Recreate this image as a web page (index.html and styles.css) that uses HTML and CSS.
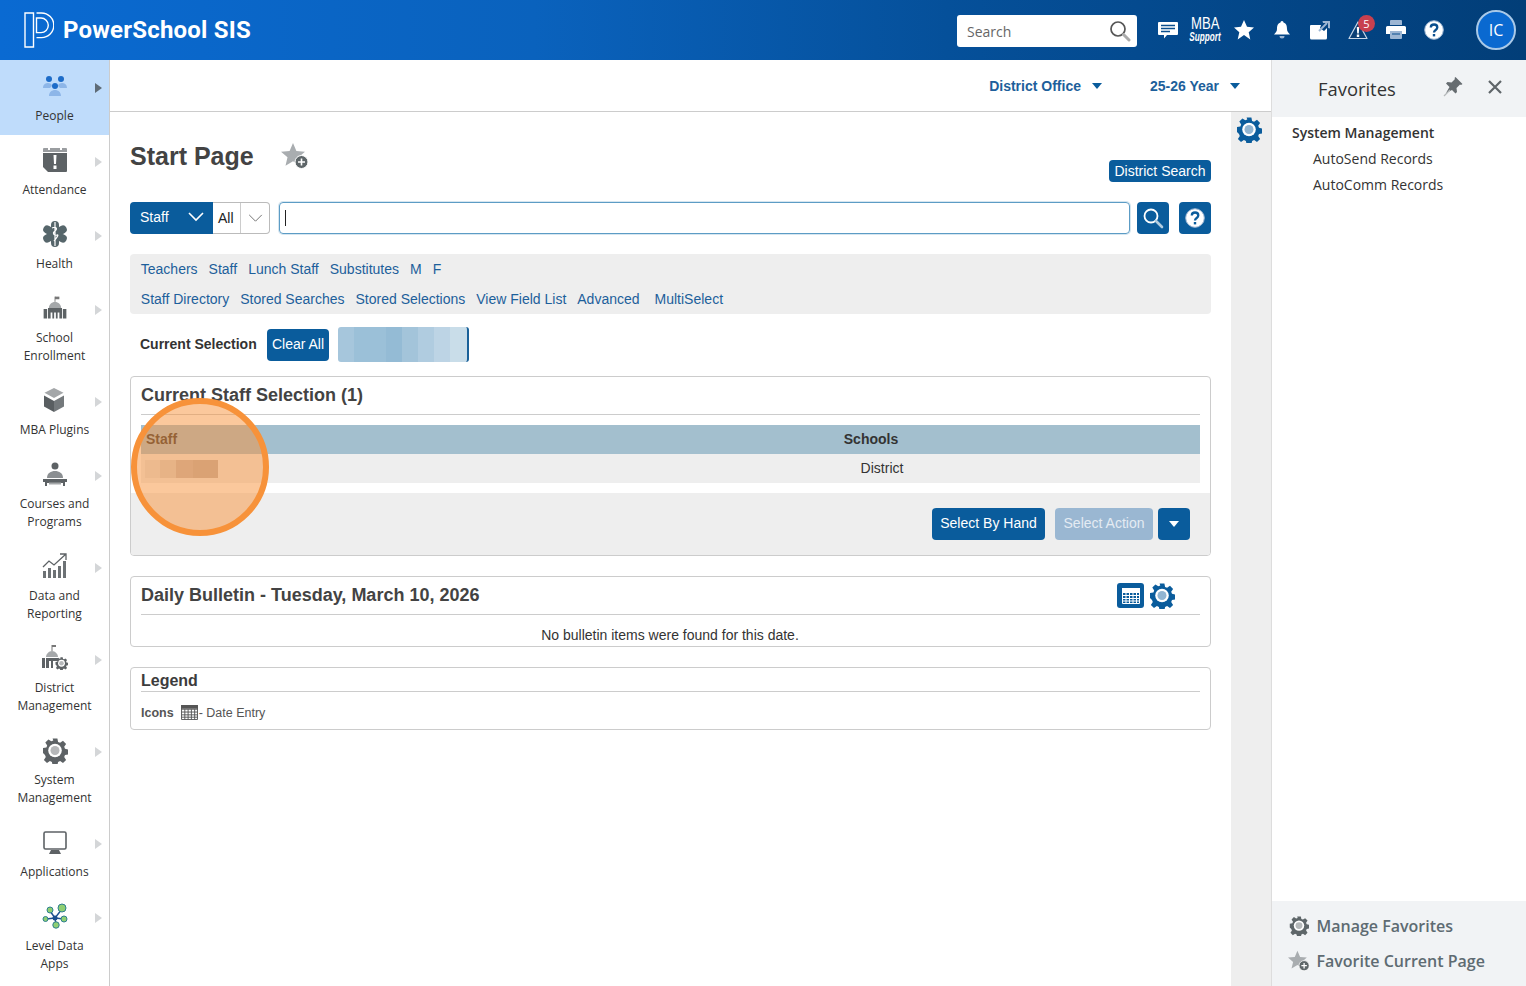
FILE: index.html
```html
<!DOCTYPE html>
<html lang="en">
<head>
<meta charset="utf-8">
<title>Start Page</title>
<link rel="stylesheet" href="styles.css">
</head>
<body>
<svg class="defs" width="0" height="0" aria-hidden="true">
  <symbol id="gear" viewBox="0 0 26 26">
    <path fill="currentColor" d="M10.600 1h4.800l.7 3.400 2 .8 2.900-1.900 3.100 3.100-1.900 2.900.8 2 3.400.7v4.800l-3.400.7-.8 2 1.900 2.900-3.100 3.100-2.900-1.900-2 .8-.7 3.400h-4.800l-.7-3.400-2-.8-2.900 1.900-3.100-3.100 1.900-2.900-.8-2L1 15.400v-4.800l3.400-.7.8-2-1.900-2.900 3.100-3.100 2.900 1.900 2-.8z" transform="translate(0 -.5)"/>
    <circle cx="13" cy="12.500" r="6.800" fill="#fff"/>
    <circle cx="13" cy="12.500" r="4.500" fill="currentColor" opacity=".45"/>
  </symbol>
  <symbol id="starplus" viewBox="0 0 28 28">
    <path fill="#a9adb0" d="M12 1l3.400 8 8.600.7-6.500 5.600 2 8.400-7.500-4.500-7.500 4.500 2-8.400L0 9.700 8.600 9z"/>
    <circle cx="20.500" cy="20" r="6.500" fill="#5e6669" stroke="#fff" stroke-width="1"/>
    <path stroke="#fff" stroke-width="1.600" d="M17 20h7M20.500 16.500v7"/>
  </symbol>
  <symbol id="cal" viewBox="0 0 18 16">
    <path fill="none" stroke="currentColor" stroke-width="1" d="M.5.500h17v15H.5zM.5 4.500h17M.5 7.500h17M.5 10.500h17M.5 13h17M4 4.500v11M7.500 4.500v11M11 4.500v11M14.500 4.500v11"/>
    <rect x="0" y="0" width="18" height="4" fill="currentColor"/>
  </symbol>
</svg>

<header class="topbar">
  <div class="brand">
    <svg class="logo" viewBox="0 0 30 36" width="30" height="36" aria-hidden="true">
      <path fill="none" stroke="#fff" stroke-width="1.400" d="M1 1h8.500v34H1zM12.500 1h5a12.300 12.300 0 0 1 0 24.600h-5M12.500 6h4.500a7.300 7.300 0 0 1 0 14.600h-4.500z"/>
    </svg>
    <span class="brand-name">PowerSchool SIS</span>
  </div>
  <div class="tools">
    <div class="search-box">
      <span>Search</span>
      <svg viewBox="0 0 22 22" width="22" height="22" aria-hidden="true"><circle cx="9" cy="9" r="7" fill="none" stroke="#555" stroke-width="1.700"/><path stroke="#aaa" stroke-width="3" stroke-linecap="round" d="M14.500 14.500l5.500 5.500"/></svg>
    </div>
    <svg class="tool" viewBox="0 0 20 20" aria-hidden="true"><path fill="#fff" d="M1 2h18a1 1 0 0 1 1 1v11a1 1 0 0 1-1 1H9l-3 3.500V15H1a1 1 0 0 1-1-1V3a1 1 0 0 1 1-1z"/><path stroke="#0b4f8e" stroke-width="1.400" d="M3 5.500h14M3 8.500h14M3 11.500h9"/></svg>
    <div class="mba"><b>MBA</b><i>Support</i></div>
    <svg class="tool" viewBox="0 0 20 20" aria-hidden="true"><path fill="#fff" d="M10 0l3 6.800 7 .7-5.300 4.800 1.600 7.200L10 15l-6.300 4.500 1.600-7.200L0 7.500l7-.7z"/></svg>
    <svg class="tool" viewBox="0 0 20 20" aria-hidden="true"><path fill="#fff" d="M10 1a1.500 1.500 0 0 1 1.500 1.600c3 .9 3.500 3.700 3.500 6.400 0 2.400 1.500 4 3 5.500H2c1.500-1.500 3-3.100 3-5.500 0-2.700.5-5.500 3.500-6.400A1.500 1.500 0 0 1 10 1z"/><path fill="#9db6d3" d="M7.500 16h5a2.500 2.500 0 0 1-5 0z"/></svg>
    <svg class="tool" viewBox="0 0 20 20" aria-hidden="true"><path fill="#fff" d="M1 5h10l-1 3 4 3 3-3v10a1.500 1.500 0 0 1-1.500 1.500h-14A1.500 1.500 0 0 1 0 18V6a1 1 0 0 1 1-1z"/><path stroke="#9db6d3" stroke-width="2" fill="none" d="M9 11l8-8"/><path fill="#9db6d3" d="M12.500 1H20v7.500l-2-.5V3h-5z"/></svg>
    <span class="alert">
      <svg class="tool" viewBox="0 0 20 20" aria-hidden="true"><path fill="#0b3f75" stroke="#c9d6e6" stroke-width="1.200" stroke-linejoin="round" d="M10 2l9 16.500H1z"/><path fill="#fff" d="M8.800 7h2.400l-.4 6.500H9.200zM8.800 14.500h2.400v2.400H8.800z"/></svg>
      <span class="badge">5</span>
    </span>
    <svg class="tool" viewBox="0 0 20 20" aria-hidden="true"><path fill="#9db6d3" d="M5 0h10a1 1 0 0 1 1 1v4H4V1a1 1 0 0 1 1-1z"/><path fill="#fff" d="M1.500 6h17A1.500 1.500 0 0 1 20 7.500V14h-4v-3H4v3H0V7.500A1.500 1.500 0 0 1 1.500 6z"/><path fill="#9db6d3" d="M4 11h12v7a1 1 0 0 1-1 1H5a1 1 0 0 1-1-1z"/><path stroke="#0b4f8e" d="M6 14h8"/></svg>
    <svg class="tool" viewBox="0 0 20 20" aria-hidden="true"><circle cx="10" cy="10" r="9.300" fill="#fff" stroke="#9db6d3" stroke-width="1"/><path fill="none" stroke="#0b4f8e" stroke-width="2.300" d="M6.800 7.500c0-4 6.500-4 6.500 0 0 2.500-3.300 2.500-3.300 5"/><path fill="#0b4f8e" d="M8.800 14h2.400v2.400H8.800z"/></svg>
    <div class="avatar">IC</div>
  </div>
</header>

<div class="body-row">
  <nav class="sidebar">
    <a class="nav-item active"><span class="arrow"></span>
      <svg class="nav-icon" viewBox="0 0 28 28" aria-hidden="true"><g fill="#8db6e8"><path d="M2 16c0-4 3-5 5-5s4 1 4 3l-2 2zM26 16c0-4-3-5-5-5s-4 1-4 3l2 2zM8 24c0-4 3-6 6-6s6 2 6 6z"/></g><g fill="#1d6cc8"><circle cx="8" cy="7" r="3"/><circle cx="20" cy="7" r="3"/><circle cx="14" cy="14" r="3"/></g></svg>
      <span class="nav-label">People</span></a>
    <a class="nav-item"><span class="arrow"></span>
      <svg class="nav-icon" viewBox="0 0 28 28" aria-hidden="true"><path fill="#9a9da0" d="M3 2h22a1 1 0 0 1 1 1v3H2V3a1 1 0 0 1 1-1z"/><path fill="#5d6265" d="M2 7h24v18a1 1 0 0 1-1 1H7l-5-5z"/><path fill="#fff" d="M12.500 9h3l-.5 9h-2zM12.500 19.500h3V23h-3zM7 1h2v3H7zM19 1h2v3h-2z"/></svg>
      <span class="nav-label">Attendance</span></a>
    <a class="nav-item"><span class="arrow"></span>
      <svg class="nav-icon" viewBox="0 0 28 28" aria-hidden="true"><g stroke="#56666b" stroke-width="8" stroke-linecap="round"><path d="M14 5v18M6.200 9.500l15.600 9M6.200 18.500l15.600-9"/></g><path fill="none" stroke="#fff" stroke-width="1.200" d="M14 2v24M11 8c4-2 6 1 3 3s-1 5 2 4-3 6-3 6"/></svg>
      <span class="nav-label">Health</span></a>
    <a class="nav-item tall"><span class="arrow"></span>
      <svg class="nav-icon" viewBox="-2 -2 32 32" aria-hidden="true"><path stroke="#777" d="M14 1v6"/><path fill="#777" d="M14 1h5v3h-5z"/><path fill="#a5a8aa" d="M7 14c0-4 3-7 7-7s7 3 7 7z"/><path fill="#5d6265" d="M1 15h4v11H1zM23 15h4v11h-4zM6 14h16v12h-3v-7h-2v7h-2v-7h-2v7h-2v-7H9v7H6z"/></svg>
      <span class="nav-label">School<br>Enrollment</span></a>
    <a class="nav-item"><span class="arrow"></span>
      <svg class="nav-icon" viewBox="0 0 28 28" aria-hidden="true"><path fill="#a4a7a9" d="M13 2l9.500 4.800-9.500 5.200-9.500-5.200z"/><path fill="#595e61" d="M3 9.500l10 5.500V26L3 20.500z"/><path fill="#74797c" d="M23 9.500L13 15v11l10-5.500z"/></svg>
      <span class="nav-label">MBA Plugins</span></a>
    <a class="nav-item tall"><span class="arrow"></span>
      <svg class="nav-icon" viewBox="0 0 28 28" aria-hidden="true"><circle cx="14" cy="6" r="3.500" fill="#5d6265"/><path fill="#8b8f92" d="M6 18c0-5 4-7 8-7s8 2 8 7z"/><path fill="#5d6265" d="M2 19h24v3h-2v4h-2v-3H6v3H4v-4H2z"/><path fill="#a4a7a9" d="M8 22.500h12v2H8z"/></svg>
      <span class="nav-label">Courses and<br>Programs</span></a>
    <a class="nav-item tall"><span class="arrow"></span>
      <svg class="nav-icon" viewBox="0 0 28 28" aria-hidden="true"><path fill="#6d7275" d="M2 19h3v7H2zM7 16h3v10H7zM12 18h3v8h-3zM17 14h3v12h-3zM22 9h3v17h-3z"/><path fill="none" stroke="#5d6265" stroke-width="1.300" d="M2 15l6-6 5 4L25 2M19 2h6v6"/></svg>
      <span class="nav-label">Data and<br>Reporting</span></a>
    <a class="nav-item tall"><span class="arrow"></span>
      <svg class="nav-icon" viewBox="0 0 28 28" aria-hidden="true"><path stroke="#777" d="M11 1v6"/><path fill="#777" d="M11 1h4v2h-4z"/><path fill="#a5a8aa" d="M5 13c0-3 3-6 6-6s6 3 6 6z"/><path fill="#5d6265" d="M1 14h3v10H1zM5 14h12v3h-5v7h-2v-7H8v7H5z"/><use href="#gear" x="14" y="13" width="13" height="13" class="gear-grey"/></svg>
      <span class="nav-label">District<br>Management</span></a>
    <a class="nav-item tall"><span class="arrow"></span>
      <svg class="nav-icon gear-grey" viewBox="0 0 28 28" aria-hidden="true"><use href="#gear" x="1" y="2" width="26" height="26"/></svg>
      <span class="nav-label">System<br>Management</span></a>
    <a class="nav-item"><span class="arrow"></span>
      <svg class="nav-icon" viewBox="0 0 28 28" aria-hidden="true"><rect x="3" y="4" width="22" height="17" rx="1.500" fill="none" stroke="#5d6265" stroke-width="1.600"/><path fill="#5d6265" d="M10 22h8l2 4H8z"/></svg>
      <span class="nav-label">Applications</span></a>
    <a class="nav-item tall"><span class="arrow"></span>
      <svg class="nav-icon" viewBox="0 0 28 28" aria-hidden="true"><path stroke="#1c4f8f" stroke-width="1.400" d="M9 9l5 7M21 7l-7 9M14 16l-9 1M14 16l9 1M14 16l1 7"/><g fill="#8fcf72" stroke="#2d7f8f"><circle cx="9" cy="8" r="3"/><circle cx="21" cy="6" r="4"/><circle cx="4.500" cy="17" r="2.500"/><circle cx="23" cy="17" r="3"/><circle cx="15" cy="23" r="3.200"/></g><circle cx="14" cy="16" r="2.500" fill="#1c4f8f"/></svg>
      <span class="nav-label">Level Data<br>Apps</span></a>
  </nav>

  <div class="main">
    <div class="subbar">
      <a class="sub-link">District Office<span class="tri"></span></a>
      <a class="sub-link">25-26 Year<span class="tri"></span></a>
    </div>
    <div class="main-row">
      <main class="content">
        <div class="title-row">
          <h1>Start Page</h1>
          <svg class="title-star" aria-hidden="true"><use href="#starplus"/></svg>
          <a class="btn btn-small">District Search</a>
        </div>

        <div class="search-row">
          <div class="select-staff">Staff
            <svg viewBox="0 0 16 10" width="16" height="10" aria-hidden="true"><path fill="none" stroke="#fff" stroke-width="1.600" d="M1 1l7 7 7-7"/></svg>
          </div>
          <div class="select-all"><span class="all-text">All</span>
            <span class="all-caret"><svg viewBox="0 0 16 10" width="15" height="9" aria-hidden="true"><path fill="none" stroke="#666" stroke-width="1" d="M1 1l7 7 7-7"/></svg></span>
          </div>
          <div class="main-input"><span class="cursor"></span></div>
          <a class="square-btn">
            <svg viewBox="0 0 22 22" width="22" height="22" aria-hidden="true"><circle cx="9" cy="9" r="6.500" fill="none" stroke="#fff" stroke-width="1.800"/><path stroke="#b3cde0" stroke-width="2.600" stroke-linecap="round" d="M14 14l6 6"/></svg>
          </a>
          <a class="square-btn help">
            <svg viewBox="0 0 20 20" width="20" height="20" aria-hidden="true"><circle cx="10" cy="10" r="9.300" fill="#fff" stroke="#9db6d3"/><path fill="none" stroke="#0a5c9c" stroke-width="2.300" d="M6.800 7.500c0-4 6.500-4 6.500 0 0 2.500-3.300 2.500-3.300 5"/><path fill="#0a5c9c" d="M8.800 14h2.400v2.400H8.800z"/></svg>
          </a>
        </div>

        <div class="link-box">
          <div class="link-line"><a>Teachers</a><a>Staff</a><a>Lunch Staff</a><a>Substitutes</a><a>M</a><a>F</a></div>
          <div class="link-line"><a>Staff Directory</a><a>Stored Searches</a><a>Stored Selections</a><a>View Field List</a><a>Advanced</a><a class="multi">MultiSelect</a></div>
        </div>

        <div class="selection-row">
          <strong>Current Selection</strong>
          <a class="btn btn-clear">Clear All</a>
          <div class="blur-name"></div>
        </div>

        <section class="panel panel-selection">
          <h2>Current Staff Selection (1)</h2>
          <div class="sel-table">
            <div class="sel-head"><span class="col-staff">Staff</span><span class="col-schools">Schools</span></div>
            <div class="sel-cells"><span class="col-staff"><span class="blur-cell"></span></span><span class="col-schools col-district">District</span></div>
          </div>
          <div class="panel-actions">
            <a class="btn btn-action">Select By Hand</a>
            <a class="btn btn-action btn-disabled">Select Action</a>
            <a class="btn btn-caret"><span class="tri tri-white"></span></a>
          </div>
          <div class="spotlight"></div>
        </section>

        <section class="panel panel-bulletin">
          <div class="bulletin-head">
            <h2>Daily Bulletin - Tuesday, March 10, 2026</h2>
            <a class="cal-btn"><svg width="18" height="16" aria-hidden="true"><use href="#cal"/></svg></a>
            <svg class="head-gear" aria-hidden="true"><use href="#gear"/></svg>
          </div>
          <p>No bulletin items were found for this date.</p>
        </section>

        <section class="panel panel-legend">
          <h3>Legend</h3>
          <div class="legend-row"><b>Icons</b><svg width="17" height="15" class="legend-cal" aria-hidden="true"><use href="#cal"/></svg><span>- Date Entry</span></div>
        </section>
      </main>
      <aside class="strip"><svg class="strip-gear" aria-hidden="true"><use href="#gear"/></svg></aside>
    </div>
  </div>

  <aside class="favorites">
    <div class="fav-head">
      <span class="fav-title">Favorites</span>
      <svg class="fav-pin" viewBox="0 0 20 20" width="20" height="20" aria-hidden="true"><path fill="#666c70" d="M12.500 0l7 7-1.500 1-1-.5-3.500 3.500.5 4-1.500 1.500-3.500-3.500L3 16l3.500-6L3 6.500 4.500 5l4 .5L12 2l-.5-1z"/><path stroke="#b5b9bb" stroke-width="1.300" d="M1 19l6-6"/></svg>
      <svg class="fav-close" viewBox="0 0 14 14" width="14" height="14" aria-hidden="true"><path stroke="#5f6569" stroke-width="2.200" d="M1 1l12 12M13 1L1 13"/></svg>
    </div>
    <div class="fav-list">
      <div class="fav-group">System Management</div>
      <div class="fav-item">AutoSend Records</div>
      <div class="fav-item">AutoComm Records</div>
    </div>
    <div class="fav-foot">
      <div class="fav-foot-row"><svg class="foot-icon foot-gear" aria-hidden="true"><use href="#gear"/></svg>Manage Favorites</div>
      <div class="fav-foot-row"><svg class="foot-icon" aria-hidden="true"><use href="#starplus"/></svg>Favorite Current Page</div>
    </div>
  </aside>
</div>
</body>
</html>
```
FILE: styles.css
```css
* { box-sizing: border-box; }
html, body { margin: 0; height: 100%; }
body {
  width: 1526px;
  height: 986px;
  overflow: hidden;
  display: flex;
  flex-direction: column;
  font-family: "Liberation Sans", Arial, sans-serif;
  font-size: 14px;
  color: #333;
  background: #fff;
}
.defs { position: absolute; }
a { color: inherit; text-decoration: none; }

/* top bar */
.topbar {
  height: 60px;
  flex: none;
  display: flex;
  align-items: center;
  justify-content: space-between;
  padding: 0 10px 0 24px;
  background: linear-gradient(90deg, #0a6ad2 0%, #0a62bd 35%, #05509a 62%, #023e78 100%);
}
.brand { display: flex; align-items: center; color: #fff; }
.logo { margin-right: 9px; }
.brand-name { font: 700 24px Roboto, sans-serif; letter-spacing: .2px; }
.tools { display: flex; align-items: center; gap: 18px; }
.search-box {
  width: 180px;
  height: 32px;
  margin-top: 2px;
  background: #fff;
  border-radius: 3px;
  display: flex;
  align-items: center;
  justify-content: space-between;
  padding: 0 6px 0 10px;
  font: 14px "Open Sans", sans-serif;
  color: #666;
  margin-right: 3px;
}
.tool { width: 20px; height: 20px; display: block; }
.mba {
  width: 30px;
  margin: 0 -4px 0 -6px;
  color: #fff;
  display: flex;
  flex-direction: column;
  align-items: center;
  line-height: 1;
  white-space: nowrap;
  font-family: "Liberation Sans", sans-serif;
}
.mba b { font-weight: 400; font-size: 16px; line-height: 14px; transform: scaleX(.82); }
.mba i { font-size: 12px; line-height: 12px; font-weight: 700; transform: scaleX(.68); }
.alert { position: relative; display: block; }
.badge {
  position: absolute;
  left: 10px;
  top: -5px;
  width: 17px;
  height: 17px;
  border-radius: 50%;
  background: #c8404f;
  color: #fff;
  font: 11px/17px "Open Sans", sans-serif;
  text-align: center;
}
.avatar {
  width: 40px;
  height: 40px;
  margin-left: 14px;
  border-radius: 50%;
  background: #0a69d0;
  border: 2px solid #a9c9e8;
  color: #fff;
  font: 16px/36px "Open Sans", sans-serif;
  text-align: center;
}

.body-row { flex: 1; display: flex; min-height: 0; }

/* sidebar */
.sidebar {
  width: 110px;
  flex: none;
  border-right: 1px solid #ccc;
  display: flex;
  flex-direction: column;
}
.nav-item {
  position: relative;
  display: block;
  height: 74px;
  padding-top: 12px;
  text-align: center;
}
.nav-item.tall { height: 92px; }
.nav-item.active { background: #bfdcfb; height: 75px; margin-bottom: -1px; }
.nav-icon { display: block; width: 28px; height: 28px; margin: 0 auto 7px; }
.nav-label { display: block; font: 12px/18px "Open Sans", sans-serif; color: #333; }
.arrow {
  position: absolute;
  left: 95px;
  top: 23px;
  border-left: 7px solid #d4d6d8;
  border-top: 5px solid transparent;
  border-bottom: 5px solid transparent;
}
.active .arrow { border-left-color: #5e6b76; }
.gear-grey { color: #5d6265; }

/* main */
.main { flex: 1; display: flex; flex-direction: column; min-width: 0; }
.subbar {
  height: 52px;
  flex: none;
  border-bottom: 1px solid #ccc;
  display: flex;
  justify-content: flex-end;
  align-items: center;
  padding: 0 31px 0 0;
  gap: 48px;
}
.sub-link { display: flex; align-items: center; font-weight: 700; font-size: 14px; color: #1d5f9b; }
.tri {
  display: inline-block;
  margin-left: 11px;
  border-top: 6px solid #0a5c9c;
  border-left: 5px solid transparent;
  border-right: 5px solid transparent;
}
.tri-white { margin: 0; border-top-color: #fff; }
.main-row { flex: 1; display: flex; min-height: 0; }
.content { flex: 1; padding: 0 20px; min-width: 0; }
.strip { width: 40px; flex: none; background: #eee; padding: 5px 0 0 5px; }
.strip-gear { display: block; width: 26px; height: 26px; color: #0a5c9c; }

.title-row { height: 90px; display: flex; align-items: flex-start; position: relative; }
h1 { margin: 28px 0 0; font-size: 25px; line-height: 32px; font-weight: 700; color: #434343; }
.title-star { width: 28px; height: 28px; margin: 30px 0 0 27px; }
.btn {
  display: inline-flex;
  align-items: center;
  justify-content: center;
  background: #0a5c9c;
  color: #fff;
  border-radius: 4px;
  font-size: 14px;
  padding-bottom: 2px;
}
.btn-small { height: 22px; width: 102px; margin: 48px 0 0 auto; padding-bottom: 0; }

.search-row { display: flex; height: 32px; }
.select-staff {
  width: 83px;
  background: #0a5c9c;
  color: #fff;
  border-radius: 4px 0 0 4px;
  display: flex;
  align-items: center;
  justify-content: space-between;
  padding: 0 9px 2px 10px;
  font-size: 14px;
}
.select-all {
  width: 57px;
  border: 1px solid #bbb;
  border-left: 0;
  border-radius: 0 4px 4px 0;
  display: flex;
  align-items: stretch;
  margin-right: 9px;
  font-size: 14px;
  color: #222;
}
.all-text { width: 27px; padding-left: 5px; line-height: 30px; }
.all-caret { flex: 1; border-left: 1px solid #ccc; display: flex; align-items: center; justify-content: center; }
.main-input {
  flex: 1;
  border: 1px solid #5c9cc5;
  box-shadow: 0 0 0 1px rgba(92, 156, 197, .25);
  border-radius: 4px;
  padding: 7px 0 0 5px;
  margin-right: 7px;
}
.cursor { display: block; width: 1px; height: 16px; background: #222; }
.square-btn {
  width: 32px;
  height: 32px;
  background: #0a5c9c;
  border-radius: 4px;
  display: flex;
  align-items: center;
  justify-content: center;
}
.help { margin-left: 10px; }

.link-box {
  margin-top: 20px;
  height: 60px;
  background: #eee;
  border-radius: 4px;
  padding-left: 10.800px;
  color: #1d5f9b;
}
.link-line { display: flex; gap: 11px; height: 30px; line-height: 30px; }
.multi { margin-left: 4px; }

.selection-row { display: flex; align-items: center; height: 35px; margin-top: 13px; }
.selection-row strong { margin-left: 10px; width: 127px; padding-bottom: 2px; color: #333; }
.btn-clear { width: 62px; height: 32px; }
.blur-name {
  width: 131px;
  height: 35px;
  margin-left: 9px;
  border-right: 2px solid #1a6199;
  border-radius: 3px;
  background: linear-gradient(90deg, #a6c6dc 0 16px, #9bc0d8 16px 48px, #94bbd5 48px 64px, #a3c4da 64px 80px, #b0cce0 80px 96px, #bdd4e5 96px 112px, #c9dde9 112px);
}

.panel {
  position: relative;
  border: 1px solid #ccc;
  border-radius: 4px;
  background: #fff;
}
.panel h2 { margin: 0; font-size: 18px; line-height: 36px; height: 38px; font-weight: 700; color: #434343; border-bottom: 1px solid #ccc; }
.panel-selection { margin-top: 14px; height: 180px; overflow: visible; }
.panel-selection > h2 { margin: 0 10px; }
.sel-table { margin: 10px 10px 0; }
.sel-head, .sel-cells { display: flex; height: 29px; line-height: 29px; }
.sel-head { background: #a3bfce; font-weight: 700; color: #333; }
.sel-cells { background: #eee; color: #333; }
.col-staff { width: 401px; padding-left: 5px; }
.col-schools { flex: 1; text-align: center; }
.col-district { padding-left: 22px; }
.blur-cell { display: block; width: 73px; height: 18px; margin: 6px 0 0 -1px; background: linear-gradient(90deg, #e2e2e2 0 15px, #d6d4d3 15px 31px, #c4bbb8 31px 48px, #bdb2ae 48px); }
.panel-actions {
  position: absolute;
  left: 0;
  right: 0;
  bottom: 0;
  height: 62px;
  background: #eee;
  border-radius: 0 0 3px 3px;
  display: flex;
  justify-content: flex-end;
  align-items: flex-start;
  padding: 15px 20px 0 0;
}
.btn-action { width: 113px; height: 32px; }
.btn-disabled { width: 98px; margin-left: 10px; background: #9ab7d2; color: #e4ebf2; border-radius: 4px; }
.btn-caret { width: 32px; height: 32px; margin-left: 5px; padding-bottom: 0; }
.spotlight {
  position: absolute;
  left: 0;
  top: 21px;
  width: 138px;
  height: 138px;
  border: 6px solid #f7923a;
  border-radius: 50%;
  background: rgba(247, 146, 58, .5);
}

.panel-bulletin { margin-top: 20px; height: 71px; }
.bulletin-head {
  display: flex;
  align-items: center;
  height: 38px;
  margin: 0 10px;
  border-bottom: 1px solid #ccc;
  padding-right: 25px;
}
.bulletin-head h2 { border: 0; flex: 1; height: 36px; margin-top: -2px; }
.cal-btn {
  width: 27px;
  height: 25px;
  background: #0a5c9c;
  border-radius: 3px;
  color: #fff;
  display: flex;
  align-items: center;
  justify-content: center;
}
.head-gear { width: 26px; height: 26px; margin-left: 5px; color: #0a5c9c; }
.panel-bulletin p { margin: 0; padding: 4px 1px 0 0; text-align: center; line-height: 32px; color: #333; }

.panel-legend { margin-top: 20px; height: 63px; padding: 0 10px; }
.panel-legend h3 { margin: 0; padding-top: 1px; font-size: 16px; line-height: 23px; height: 24px; font-weight: 700; color: #3c3c3c; border-bottom: 1px solid #ccc; }
.legend-row { display: flex; align-items: center; height: 41px; font-size: 12.500px; color: #555; }
.legend-cal { margin: 0 0 0 7px; color: #555; }
.legend-row span { margin-left: 1px; }

/* favorites */
.favorites {
  width: 255px;
  flex: none;
  border-left: 1px solid #ddd;
  display: flex;
  flex-direction: column;
  font-family: "Open Sans", sans-serif;
  background: #fff;
}
.fav-head {
  height: 57px;
  background: #f1f3f5;
  position: relative;
  display: flex;
  align-items: center;
  padding: 0 0 0 46px;
}
.fav-title { font-size: 18.400px; color: #333; width: 125px; font-weight: 500; }
.fav-pin { margin-top: -4px; }
.fav-close { margin: -4px 0 0 25px; }
.fav-list { flex: 1; padding: 3px 0 0 20px; font-size: 14px; color: #333; }
.fav-group { line-height: 26px; font-weight: 600; }
.fav-item { line-height: 26px; padding-left: 21px; }
.fav-foot { height: 85px; background: #f1f3f5; padding: 7px 0 0 16px; }
.fav-foot-row {
  display: flex;
  align-items: center;
  height: 35px;
  font-size: 16px;
  font-weight: 600;
  color: #5e6b72;
}
.foot-icon { width: 22px; height: 22px; margin-right: 6.500px; flex: none; }
.foot-gear { color: #5e6669; width: 20px; height: 20px; margin: 0 7.500px 0 1px; }
```
